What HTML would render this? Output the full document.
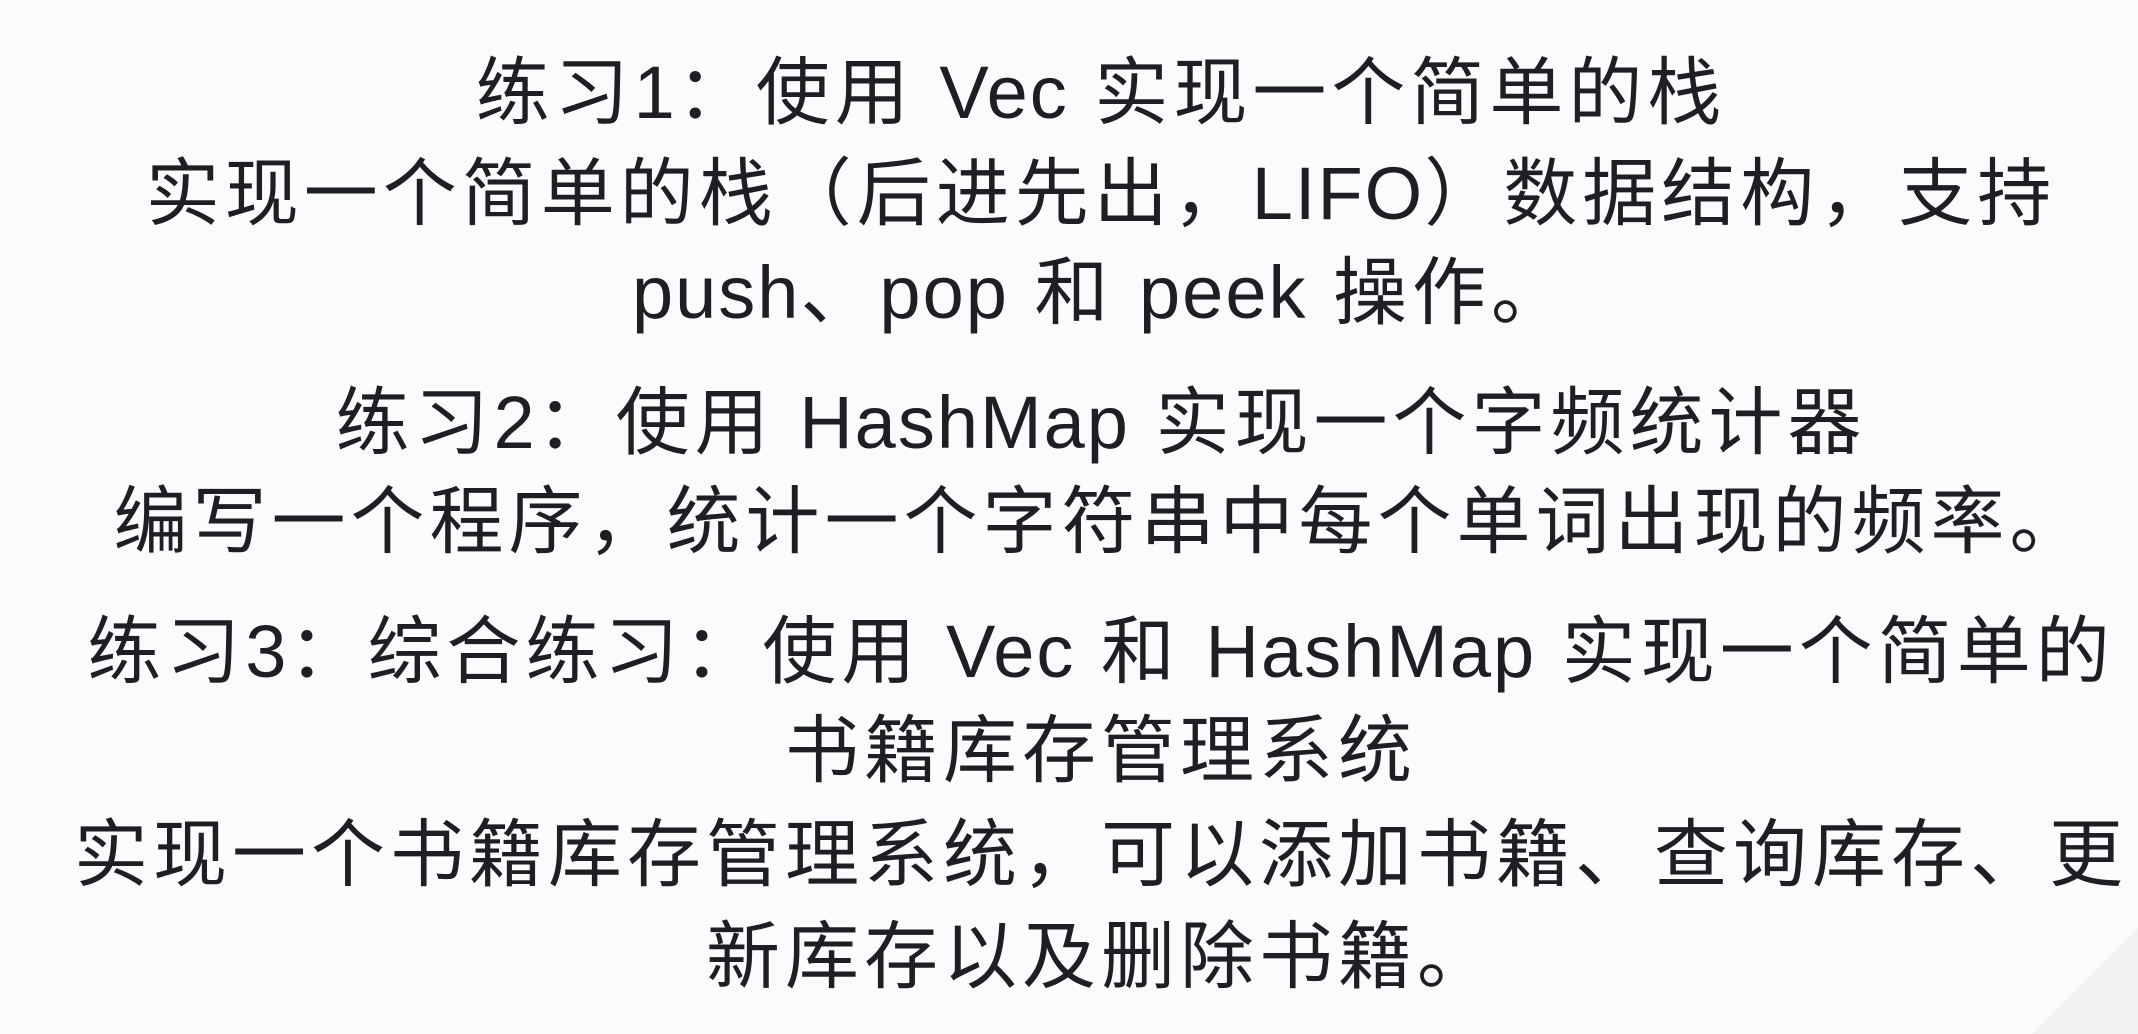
<!DOCTYPE html>
<html><head><meta charset="utf-8"><style>
html,body{margin:0;padding:0}
body{width:2138px;height:1034px;background:#fbfbfd;position:relative;overflow:hidden;font-family:"Liberation Sans","Noto Sans CJK SC",sans-serif;color:#1f1f23}
.l{position:absolute;left:32px;width:2138px;text-align:center;font-size:74px;line-height:100px;letter-spacing:5px;white-space:nowrap}
.l span{letter-spacing:2px}
.tri{position:absolute;right:0;bottom:0;width:0;height:0;border-left:106px solid transparent;border-bottom:106px solid #f1f1f3}
</style></head><body>
<div class="tri"></div>
<div class="l" style="top:43px">练习<span>1</span>：使用 <span>Vec</span> 实现一个简单的栈</div>
<div class="l" style="top:144px">实现一个简单的栈（后进先出，<span>LIFO</span>）数据结构，支持</div>
<div class="l" style="top:243px"><span>push</span>、<span>pop</span> 和 <span>peek</span> 操作。</div>
<div class="l" style="top:373px">练习<span>2</span>：使用 <span>HashMap</span> 实现一个字频统计器</div>
<div class="l" style="top:472px">编写一个程序，统计一个字符串中每个单词出现的频率。</div>
<div class="l" style="top:602px">练习<span>3</span>：综合练习：使用 <span>Vec</span> 和 <span>HashMap</span> 实现一个简单的</div>
<div class="l" style="top:701px">书籍库存管理系统</div>
<div class="l" style="top:805px">实现一个书籍库存管理系统，可以添加书籍、查询库存、更</div>
<div class="l" style="top:907px">新库存以及删除书籍。</div>
</body></html>
